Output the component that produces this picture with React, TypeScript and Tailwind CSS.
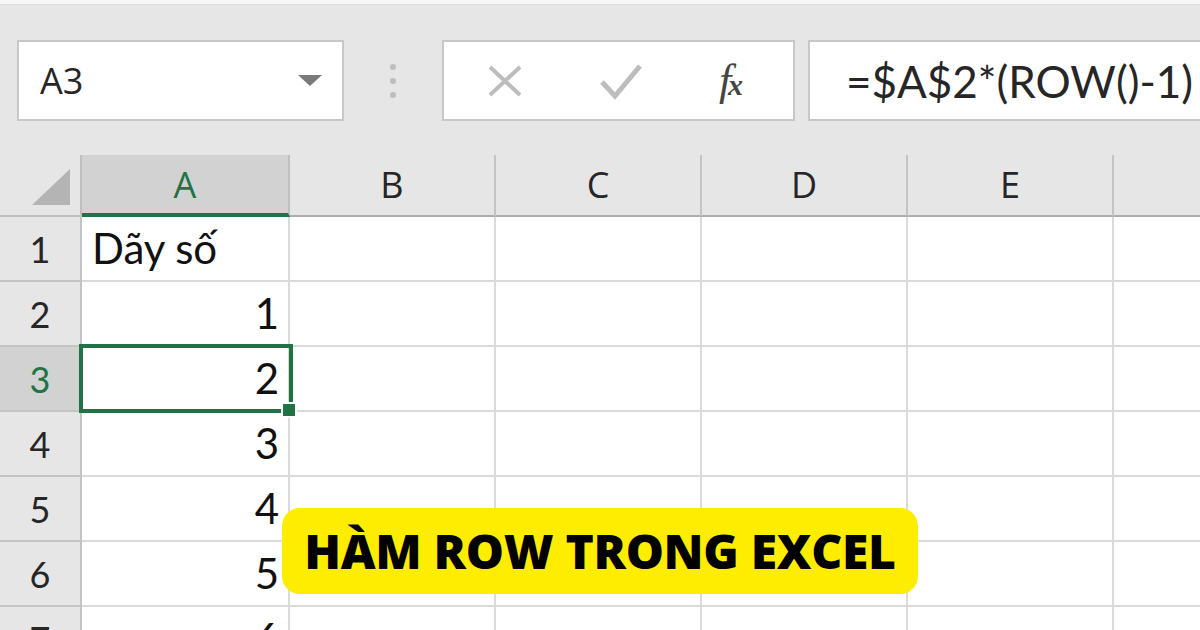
const COLS = ['A', 'B', 'C', 'D', 'E', ''];
const COL_W = [208, 206, 206, 206, 206, 100];

const ROWS: { n: number; a: string; left?: boolean }[] = [
  { n: 1, a: 'Dãy số', left: true },
  { n: 2, a: '1' },
  { n: 3, a: '2' },
  { n: 4, a: '3' },
  { n: 5, a: '4' },
  { n: 6, a: '5' },
  { n: 7, a: '6' },
];

const cellFont = { fontFamily: 'Lato, "Open Sans", sans-serif' };

function Toolbar() {
  return (
    <div className="h-[155px] bg-[#e6e6e6] flex flex-col">
      <div className="h-[5px] bg-[#f6f6f6] border-b border-[#dadada]" />
      <div className="flex items-start pt-[35px] pl-[17px]">
        {/* Name box */}
        <div className="shrink-0 w-[327px] h-[81px] bg-white border-2 border-[#c8c8c8] flex items-center justify-between pl-[21px] pr-[20px]">
          <span className="font-['Open_Sans'] text-[36px] text-[#262626] leading-none">A3</span>
          <svg width="24" height="12" viewBox="0 0 24 12">
            <path d="M0 0 L24 0 L12 11 Z" fill="#7a7a7a" />
          </svg>
        </div>

        {/* Separator dots */}
        <div className="shrink-0 w-[98px] h-[81px] flex flex-col items-center justify-center gap-[8px]">
          <span className="w-[6px] h-[6px] rounded-full bg-[#bdbdbd]" />
          <span className="w-[6px] h-[6px] rounded-full bg-[#bdbdbd]" />
          <span className="w-[6px] h-[6px] rounded-full bg-[#bdbdbd]" />
        </div>

        {/* Cancel / Enter / fx */}
        <div className="shrink-0 w-[353px] h-[81px] bg-white border-2 border-[#c8c8c8] flex items-center">
          <div className="w-[122px] flex justify-center">
            <svg width="36" height="34" viewBox="0 0 36 34">
              <path d="M3 3 L33 31 M33 3 L3 31" stroke="#bdbdbd" strokeWidth="4" fill="none" />
            </svg>
          </div>
          <div className="w-[110px] flex justify-center">
            <svg width="44" height="38" viewBox="0 0 44 38">
              <path d="M3 20 L16 34 L41 4" stroke="#bdbdbd" strokeWidth="5" fill="none" />
            </svg>
          </div>
          <div className="flex-1 flex justify-center pr-[10px]">
            <span className="font-['Liberation_Serif'] italic text-[44px] leading-none text-[#444] tracking-[-3px]">
              f<span className="text-[30px] font-bold">x</span>
            </span>
          </div>
        </div>

        {/* Formula input */}
        <div className="shrink-0 ml-[13px] w-[420px] h-[81px] bg-white border-2 border-[#c8c8c8] flex items-center pl-[36px]">
          <span className="text-[44px] text-[#262626] leading-none" style={cellFont}>
            =$A$2*(ROW()-1)
          </span>
        </div>
      </div>
    </div>
  );
}

function ColumnHeader() {
  return (
    <div className="flex h-[62px] bg-[#e6e6e6]">
      <div className="w-[82px] shrink-0 flex items-end justify-end pr-[10px] pb-[10px] border-r-2 border-b-2 border-[#bfbfbf]">
        <svg width="38" height="36" viewBox="0 0 38 36">
          <path d="M38 0 L38 36 L0 36 Z" fill="#b4b4b4" />
        </svg>
      </div>
      {COLS.map((c, i) => (
        <div
          key={i}
          style={{ width: COL_W[i] }}
          className={
            c === 'A'
              ? 'shrink-0 flex items-center justify-center bg-[#d2d2d2] border-r-2 border-[#bfbfbf] border-b-4 border-b-[#217346] text-[#217346] text-[36px] font-["Open_Sans"] pt-[2px]'
              : 'shrink-0 flex items-center justify-center border-r-2 border-[#c4c4c4] border-b-2 border-b-[#adadad] text-[#262626] text-[36px] font-["Open_Sans"]'
          }
        >
          {c}
        </div>
      ))}
    </div>
  );
}

function Row({ n, a, left }: { n: number; a: string; left?: boolean }) {
  const sel = n === 3;
  return (
    <div className="flex h-[65px]">
      <div
        className={
          sel
            ? 'w-[82px] shrink-0 flex items-center justify-center bg-[#d2d2d2] border-r-2 border-b-2 border-[#c4c4c4] text-[36px] text-[#217346]'
            : 'w-[82px] shrink-0 flex items-center justify-center bg-[#e6e6e6] border-r-2 border-b-2 border-[#c4c4c4] text-[36px] text-[#262626]'
        }
        style={cellFont}
      >
        {n}
      </div>
      {COL_W.map((w, i) => (
        <div
          key={i}
          style={{ width: w, ...cellFont }}
          className={
            'shrink-0 bg-white border-r-2 border-b-2 border-[#dadada] flex items-center text-[42px] text-[#111] ' +
            (left ? 'justify-start pl-[10px]' : 'justify-end pr-[9px]')
          }
        >
          {i === 0 ? a : ''}
        </div>
      ))}
    </div>
  );
}

export default function App() {
  return (
    <div className="w-[1200px] h-[630px] overflow-hidden relative bg-white">
      <Toolbar />
      <ColumnHeader />
      {ROWS.map((r) => (
        <Row key={r.n} {...r} />
      ))}

      {/* Active cell selection */}
      <div className="absolute left-[79px] top-[344px] w-[214px] h-[69px] border-[4px] border-[#217346] pointer-events-none" />
      <div className="absolute left-[281px] top-[402px] w-[16px] h-[16px] bg-[#217346] border-2 border-white" />

      {/* Title badge */}
      <div className="absolute left-[282px] top-[508px] w-[636px] h-[86px] rounded-[18px] bg-[#ffed00] flex items-center justify-center">
        <span className="font-['Open_Sans'] font-extrabold text-[48px] tracking-[-0.3px] text-black leading-none">
          HÀM ROW TRONG EXCEL
        </span>
      </div>
    </div>
  );
}
